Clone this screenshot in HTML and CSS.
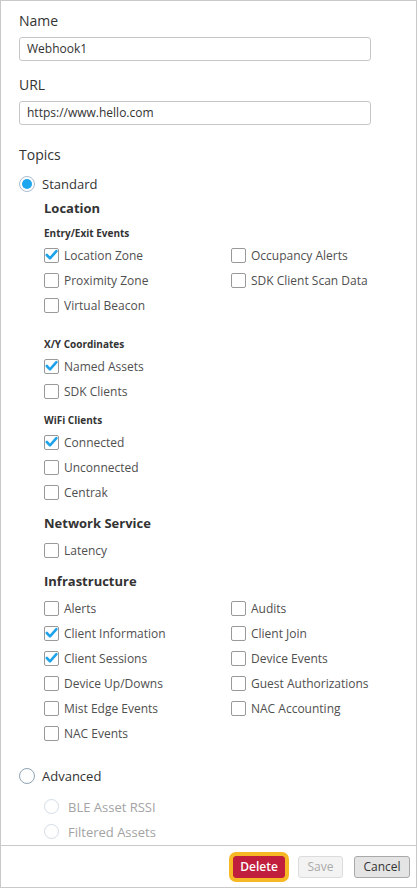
FILE: index.html
```html
<!DOCTYPE html>
<html>
<head>
<meta charset="utf-8">
<link rel="stylesheet" href="styles.css">
</head>
<body>
<div class="panel">
  <div class="content">
    <div class="field-label">Name</div>
    <div class="input">Webhook1</div>
    <div class="field-label url-label">URL</div>
    <div class="input">https://www.hello.com</div>
    <div class="field-label topics-label">Topics</div>

    <div class="radio-row top-radio">
      <span class="radio checked"><span class="dot"></span></span>
      <span class="radio-text">Standard</span>
    </div>

    <div class="options">
      <div class="heading h-location">Location</div>
      <div class="subheading sh-first">Entry/Exit Events</div>
      <div class="grid">
        <div class="col">
          <div class="cb-row"><span class="cb"><svg viewBox="0 0 15 15"><polyline points="2.8,7 6,10.3 12.4,3.2"/></svg></span><span class="cb-text">Location Zone</span></div>
          <div class="cb-row"><span class="cb"></span><span class="cb-text">Proximity Zone</span></div>
          <div class="cb-row"><span class="cb"></span><span class="cb-text">Virtual Beacon</span></div>
        </div>
        <div class="col">
          <div class="cb-row"><span class="cb"></span><span class="cb-text">Occupancy Alerts</span></div>
          <div class="cb-row"><span class="cb"></span><span class="cb-text">SDK Client Scan Data</span></div>
        </div>
      </div>

      <div class="subheading sh-xy">X/Y Coordinates</div>
      <div class="cb-row"><span class="cb"><svg viewBox="0 0 15 15"><polyline points="2.8,7 6,10.3 12.4,3.2"/></svg></span><span class="cb-text">Named Assets</span></div>
      <div class="cb-row"><span class="cb"></span><span class="cb-text">SDK Clients</span></div>

      <div class="subheading sh-wifi">WiFi Clients</div>
      <div class="cb-row"><span class="cb"><svg viewBox="0 0 15 15"><polyline points="2.8,7 6,10.3 12.4,3.2"/></svg></span><span class="cb-text">Connected</span></div>
      <div class="cb-row"><span class="cb"></span><span class="cb-text">Unconnected</span></div>
      <div class="cb-row"><span class="cb"></span><span class="cb-text">Centrak</span></div>

      <div class="heading h-section">Network Service</div>
      <div class="cb-row"><span class="cb"></span><span class="cb-text">Latency</span></div>

      <div class="heading h-section">Infrastructure</div>
      <div class="grid">
        <div class="col">
          <div class="cb-row"><span class="cb"></span><span class="cb-text">Alerts</span></div>
          <div class="cb-row"><span class="cb"><svg viewBox="0 0 15 15"><polyline points="2.8,7 6,10.3 12.4,3.2"/></svg></span><span class="cb-text">Client Information</span></div>
          <div class="cb-row"><span class="cb"><svg viewBox="0 0 15 15"><polyline points="2.8,7 6,10.3 12.4,3.2"/></svg></span><span class="cb-text">Client Sessions</span></div>
          <div class="cb-row"><span class="cb"></span><span class="cb-text">Device Up/Downs</span></div>
          <div class="cb-row"><span class="cb"></span><span class="cb-text">Mist Edge Events</span></div>
          <div class="cb-row"><span class="cb"></span><span class="cb-text">NAC Events</span></div>
        </div>
        <div class="col">
          <div class="cb-row"><span class="cb"></span><span class="cb-text">Audits</span></div>
          <div class="cb-row"><span class="cb"></span><span class="cb-text">Client Join</span></div>
          <div class="cb-row"><span class="cb"></span><span class="cb-text">Device Events</span></div>
          <div class="cb-row"><span class="cb"></span><span class="cb-text">Guest Authorizations</span></div>
          <div class="cb-row"><span class="cb"></span><span class="cb-text">NAC Accounting</span></div>
        </div>
      </div>
    </div>

    <div class="radio-row adv-radio">
      <span class="radio"></span>
      <span class="radio-text">Advanced</span>
    </div>
    <div class="options">
      <div class="sub-radio-row first-sub">
        <span class="radio small disabled"></span>
        <span class="radio-text disabled-text">BLE Asset RSSI</span>
      </div>
      <div class="sub-radio-row">
        <span class="radio small disabled"></span>
        <span class="radio-text disabled-text">Filtered Assets</span>
      </div>
    </div>
  </div>
  <div class="footer">
    <button class="btn btn-delete">Delete</button>
    <button class="btn btn-save">Save</button>
    <button class="btn btn-cancel">Cancel</button>
  </div>
</div>
</body>
</html>
```

FILE: styles.css
```css
html, body {
  margin: 0;
  padding: 0;
  background: #ffffff;
}
body {
  font-family: "Open Sans", "Liberation Sans", sans-serif;
  color: #333333;
}
.panel {
  width: 417px;
  height: 888px;
  box-sizing: border-box;
  border: 1px solid #c9c9c9;
  display: flex;
  flex-direction: column;
}
.content {
  height: 844px;
  overflow: hidden;
  padding: 10px 0 0 18px;
  box-sizing: border-box;
}
.field-label {
  font-size: 14px;
  line-height: 20px;
  color: #333333;
  margin-bottom: 6px;
}
.url-label {
  margin-top: 14px;
}
.topics-label {
  margin-top: 20px;
  margin-bottom: 0;
}
.input {
  width: 352px;
  height: 24px;
  box-sizing: border-box;
  border: 1px solid #c6c6c6;
  border-radius: 3px;
  padding: 0 7px;
  font-size: 12px;
  line-height: 22px;
  color: #333333;
}
.radio-row {
  display: flex;
  align-items: center;
  height: 20px;
}
.top-radio {
  margin-top: 9px;
}
.adv-radio {
  margin-top: 20px;
}
.radio {
  width: 16px;
  height: 16px;
  box-sizing: border-box;
  border: 1px solid #8ea2b6;
  border-radius: 50%;
  display: flex;
  align-items: center;
  justify-content: center;
  flex: none;
  background: #fff;
}
.radio.checked {
  border-color: #a9bccd;
}
.radio .dot {
  width: 10px;
  height: 10px;
  border-radius: 50%;
  background: #1ea6ee;
}
.radio.small {
  width: 15px;
  height: 15px;
}
.radio.disabled {
  border-color: #d3dce5;
}
.radio-text {
  font-size: 13px;
  margin-left: 7px;
  color: #333333;
}
.disabled-text {
  margin-left: 9px;
  color: #a3a3a3;
}
.options {
  padding-left: 25px;
}
.heading {
  font-size: 13px;
  font-weight: 700;
  line-height: 18px;
  color: #333333;
}
.h-location {
  margin-top: 5px;
}
.h-section {
  margin-top: 9px;
  margin-bottom: 6px;
}
.subheading {
  font-size: 10px;
  font-weight: 700;
  line-height: 14px;
  color: #333333;
  margin-bottom: 3px;
}
.sh-first {
  margin-top: 9px;
}
.sh-xy {
  margin-top: 19px;
}
.sh-wifi {
  margin-top: 9px;
}
.grid {
  display: grid;
  grid-template-columns: 187px 1fr;
}
.cb-row {
  display: flex;
  align-items: center;
  height: 25px;
}
.cb {
  width: 15px;
  height: 15px;
  box-sizing: border-box;
  border: 1px solid #999999;
  border-radius: 2px;
  flex: none;
  position: relative;
  background: #fff;
}
.cb svg {
  position: absolute;
  left: -1px;
  top: -1px;
  width: 15px;
  height: 15px;
}
.cb svg polyline {
  fill: none;
  stroke: #1ea2ea;
  stroke-width: 2.6;
  stroke-linecap: round;
  stroke-linejoin: round;
}
.cb-text {
  font-size: 12px;
  color: #4f4f4f;
  margin-left: 5px;
}
.sub-radio-row {
  display: flex;
  align-items: center;
  height: 25px;
}
.first-sub {
  margin-top: 8px;
}
.footer {
  flex: 1;
  border-top: 1px solid #c9c9c9;
  display: flex;
  align-items: center;
  justify-content: flex-end;
  padding: 0 6px 0 0;
  gap: 11px;
}
.btn {
  height: 22px;
  box-sizing: border-box;
  border-radius: 3px;
  font-family: "Open Sans", "Liberation Sans", sans-serif;
  font-size: 12px;
  padding: 0;
  margin: 0;
  line-height: 20px;
}
.btn-delete {
  width: 52px;
  background: #c01e3c;
  border: 1px solid #c01e3c;
  color: #ffffff;
  font-weight: 600;
  box-shadow: 0 0 0 4px #f6b825;
  margin-right: 2px;
}
.btn-save {
  width: 45px;
  background: #f3f3f3;
  border: 1px solid #dcdcdc;
  color: #aaaaaa;
}
.btn-cancel {
  width: 56px;
  background: #e4e4e4;
  border: 1px solid #a9a9a9;
  color: #333333;
}
```
